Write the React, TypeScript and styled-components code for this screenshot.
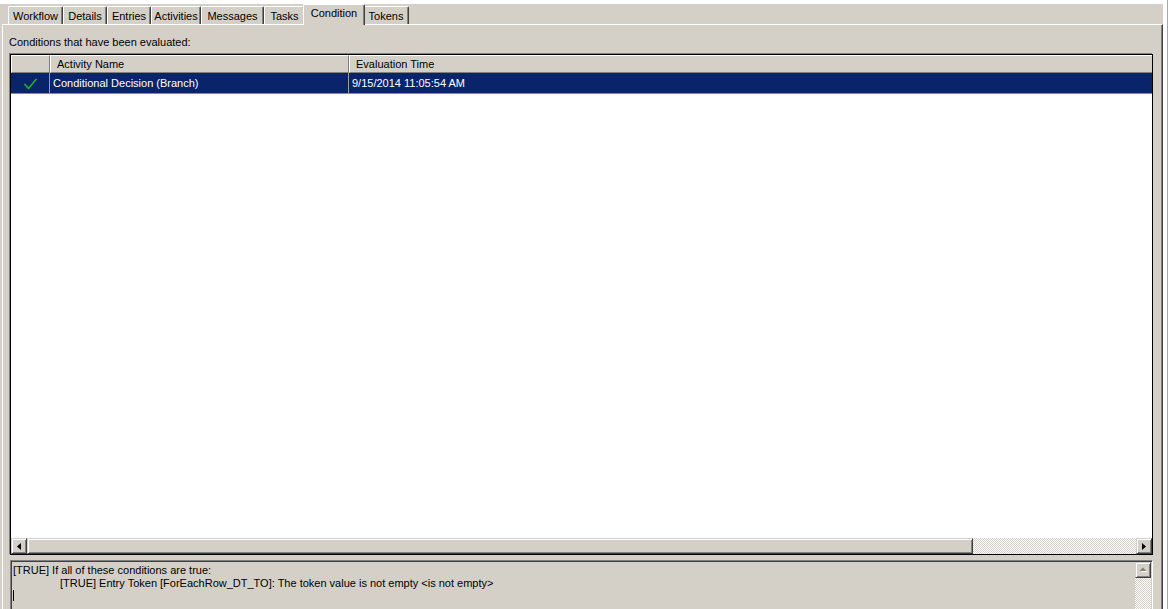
import React from "react";
import styled, { createGlobalStyle } from "styled-components";

const GlobalStyle = createGlobalStyle`
  html, body { margin: 0; padding: 0; background: #fff; }
  body {
    font-family: "Liberation Sans", Arial, sans-serif;
    font-size: 11px;
    color: #000;
    overflow: hidden;
  }
  #root { width: 1169px; height: 609px; overflow: hidden; }
`;

const Screen = styled.div`
  display: flex;
  width: 1169px;
  height: 609px;
  background: #fff;
  overflow: hidden;
`;

const Window = styled.div`
  margin-top: 4px;
  width: 1163px;
  height: 620px;
  flex: none;
  box-sizing: border-box;
  padding-left: 2px;
  background: #d4d0c8;
  display: flex;
  flex-direction: column;
`;

const EdgeLine = styled.div`
  margin-left: 4px;
  width: 1px;
  flex: none;
  background: #a8a8a8;
`;

const TabStrip = styled.div`
  height: 20px;
  flex: none;
  display: flex;
  align-items: flex-end;
  padding-left: 6px;
  position: relative;
  z-index: 1;
`;

const Tab = styled.div<{ $active?: boolean; $width: number }>`
  box-sizing: border-box;
  width: ${(p) => p.$width + (p.$active ? 4 : 0)}px;
  flex: none;
  height: ${(p) => (p.$active ? 21 : 18)}px;
  margin: ${(p) => (p.$active ? "0 -2px -1px -2px" : "0")};
  padding-top: ${(p) => (p.$active ? 2 : 3)}px;
  display: flex;
  justify-content: center;
  line-height: 13px;
  white-space: nowrap;
  background: #d4d0c8;
  border-top: 1px solid #fff;
  border-left: 1px solid #fff;
  border-right: 1px solid #404040;
  border-radius: 2px 2px 0 0;
  box-shadow: inset -1px 0 #808080;
  position: relative;
  z-index: ${(p) => (p.$active ? 2 : 1)};
`;

const Panel = styled.div`
  flex: 1;
  min-height: 0;
  display: flex;
  flex-direction: column;
  border-top: 1px solid #fff;
  border-left: 1px solid #fff;
  border-right: 1px solid #404040;
  box-shadow: inset -1px 0 #808080;
  padding: 11px 9px 0 7px;
`;

const Caption = styled.div`
  line-height: 13px;
  height: 13px;
  margin-left: -1px;
  white-space: nowrap;
`;

const ListView = styled.div`
  margin-top: 5px;
  height: 501px;
  flex: none;
  box-sizing: border-box;
  border: 1px solid #000;
  box-shadow: -1px -1px 0 #808080;
  background: #fff;
  display: flex;
  flex-direction: column;
`;

const cols = "39px 299px 1fr";

const HeaderRow = styled.div`
  display: grid;
  grid-template-columns: ${cols};
  height: 18px;
  flex: none;
  background: #d4d0c8;
`;

const HeaderCell = styled.div<{ $last?: boolean }>`
  box-sizing: border-box;
  border-top: 1px solid #fff;
  border-left: 1px solid #fff;
  border-right: ${(p) => (p.$last ? "none" : "1px solid #808080")};
  border-bottom: 1px solid #808080;
  padding: 1px 0 0 6px;
  line-height: 15px;
  white-space: nowrap;
`;

const DataRow = styled.div<{ $selected?: boolean }>`
  display: grid;
  grid-template-columns: ${cols};
  height: 21px;
  flex: none;
  box-sizing: border-box;
  border-bottom: 1px solid #8c8c8c;
  background: ${(p) => (p.$selected ? "#0a246a" : "#fff")};
  color: ${(p) => (p.$selected ? "#fff" : "#000")};
`;

const DataCell = styled.div<{ $last?: boolean; $center?: boolean }>`
  box-sizing: border-box;
  border-right: ${(p) => (p.$last ? "none" : "1px solid #9c9c9c")};
  padding: 1px 0 0 ${(p) => (p.$center ? "0" : "3px")};
  line-height: 19px;
  white-space: nowrap;
  display: flex;
  align-items: center;
  justify-content: ${(p) => (p.$center ? "center" : "flex-start")};
`;

const ListBody = styled.div`
  flex: 1;
  background: #fff;
`;

const HScroll = styled.div`
  height: 16px;
  flex: none;
  display: flex;
`;

const ScrollButton = styled.div`
  width: 16px;
  height: 16px;
  flex: none;
  box-sizing: border-box;
  background: #d4d0c8;
  border: 1px solid;
  border-color: #d4d0c8 #404040 #404040 #d4d0c8;
  box-shadow: inset 1px 1px #fff, inset -1px -1px #808080;
  display: flex;
  align-items: center;
  justify-content: center;
`;

const Thumb = styled.div<{ $size: number }>`
  width: ${(p) => p.$size}px;
  flex: none;
  box-sizing: border-box;
  background: #d4d0c8;
  border: 1px solid;
  border-color: #d4d0c8 #404040 #404040 #d4d0c8;
  box-shadow: inset 1px 1px #fff, inset -1px -1px #808080;
`;

const Track = styled.div`
  flex: 1;
  background-color: #fff;
  background-image: repeating-conic-gradient(#d4d0c8 0 25%, #fff 0 50%);
  background-size: 2px 2px;
`;

const TextBox = styled.div`
  margin-top: 5px;
  height: 70px;
  flex: none;
  box-sizing: border-box;
  border: 1px solid;
  border-color: #808080 #fff #fff #808080;
  box-shadow: inset 1px 1px #404040, inset -1px -1px #d4d0c8;
  padding: 1px;
  display: flex;
  background: #d4d0c8;
`;

const TextArea = styled.div`
  flex: 1;
  padding: 2px 0 0 1px;
  line-height: 13px;
  white-space: pre;
`;

const TextLine = styled.div<{ $indent?: number }>`
  height: 13px;
  padding-left: ${(p) => p.$indent ?? 0}px;
`;

const Caret = styled.div`
  width: 1px;
  height: 11px;
  background: #000;
`;

const VScroll = styled.div`
  width: 16px;
  flex: none;
  display: flex;
  flex-direction: column;
`;

const CheckIcon = () => (
  <svg width="13" height="12" viewBox="0 0 13 12">
    <path d="M1 6.5 L4.5 10.5 L12 1.5" fill="none" stroke="#1fae2a" strokeWidth="1.7" strokeLinecap="round" strokeLinejoin="round" />
  </svg>
);

const ArrowLeft = () => (
  <svg width="4" height="7" viewBox="0 0 4 7">
    <path d="M4 0 L0 3.5 L4 7 Z" fill="#000" />
  </svg>
);

const ArrowRight = () => (
  <svg width="4" height="7" viewBox="0 0 4 7">
    <path d="M0 0 L4 3.5 L0 7 Z" fill="#000" />
  </svg>
);

const ArrowUpDisabled = () => (
  <svg width="9" height="6" viewBox="0 0 9 6">
    <path d="M1.5 5 L8.5 5 L5 1.5 Z" fill="#fff" />
    <path d="M0.5 4 L7.5 4 L4 0.5 Z" fill="#808080" />
  </svg>
);

const tabs: { label: string; width: number }[] = [
  { label: "Workflow", width: 55 },
  { label: "Details", width: 44 },
  { label: "Entries", width: 44 },
  { label: "Activities", width: 50 },
  { label: "Messages", width: 63 },
  { label: "Tasks", width: 41 },
  { label: "Condition", width: 58 },
  { label: "Tokens", width: 46 },
];

export default function App() {
  return (
    <>
      <GlobalStyle />
      <Screen>
        <Window>
          <TabStrip>
            {tabs.map((t) => (
              <Tab key={t.label} $width={t.width} $active={t.label === "Condition"}>
                {t.label}
              </Tab>
            ))}
          </TabStrip>
          <Panel>
            <Caption>Conditions that have been evaluated:</Caption>
            <ListView>
              <HeaderRow>
                <HeaderCell />
                <HeaderCell>Activity Name</HeaderCell>
                <HeaderCell $last>Evaluation Time</HeaderCell>
              </HeaderRow>
              <DataRow $selected>
                <DataCell $center>
                  <CheckIcon />
                </DataCell>
                <DataCell>Conditional Decision (Branch)</DataCell>
                <DataCell $last>9/15/2014 11:05:54 AM</DataCell>
              </DataRow>
              <ListBody />
              <HScroll>
                <ScrollButton>
                  <ArrowLeft />
                </ScrollButton>
                <Thumb $size={946} />
                <Track />
                <ScrollButton>
                  <ArrowRight />
                </ScrollButton>
              </HScroll>
            </ListView>
            <TextBox>
              <TextArea>
                <TextLine>[TRUE] If all of these conditions are true:</TextLine>
                <TextLine $indent={47}>
                  [TRUE] Entry Token [ForEachRow_DT_TO]: The token value is not empty &lt;is not empty&gt;
                </TextLine>
                <TextLine>
                  <Caret />
                </TextLine>
              </TextArea>
              <VScroll>
                <ScrollButton>
                  <ArrowUpDisabled />
                </ScrollButton>
                <Track />
              </VScroll>
            </TextBox>
          </Panel>
        </Window>
        <EdgeLine />
      </Screen>
    </>
  );
}
